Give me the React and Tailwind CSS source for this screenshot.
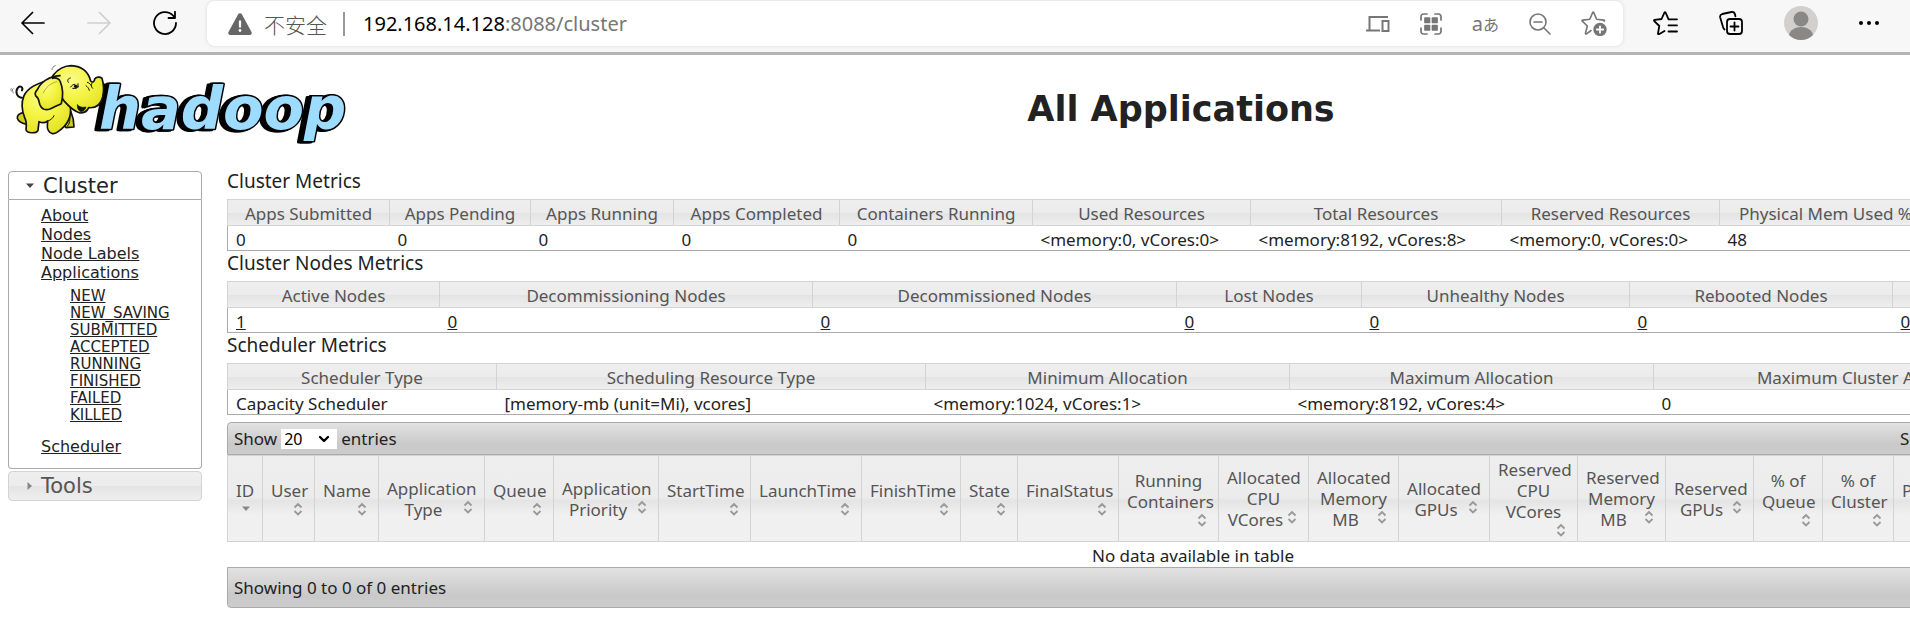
import { ChevronDown } from 'lucide-react';

const clusterMetrics = [
  { label: 'Apps Submitted', value: '0', width: 'w-[162px]' },
  { label: 'Apps Pending', value: '0', width: 'w-[141px]' },
  { label: 'Apps Running', value: '0', width: 'w-[143px]' },
  { label: 'Apps Completed', value: '0', width: 'w-[166px]' },
  { label: 'Containers Running', value: '0', width: 'w-[193px]' },
  { label: 'Used Resources', value: '<memory:0, vCores:0>', width: 'w-[218px]' },
  { label: 'Total Resources', value: '<memory:8192, vCores:8>', width: 'w-[251px]' },
  { label: 'Reserved Resources', value: '<memory:0, vCores:0>', width: 'w-[218px]' },
  { label: 'Physical Mem Used %', value: '48', width: 'w-[212px]' },
  { label: 'Physical VCores Used %', value: '0', width: '' },
];

const nodeMetrics = [
  { label: 'Active Nodes', value: '1', href: '#nodes', width: 'w-[212px]' },
  { label: 'Decommissioning Nodes', value: '0', href: '#decommissioning', width: 'w-[373px]' },
  { label: 'Decommissioned Nodes', value: '0', href: '#decommissioned', width: 'w-[364px]' },
  { label: 'Lost Nodes', value: '0', href: '#lost', width: 'w-[185px]' },
  { label: 'Unhealthy Nodes', value: '0', href: '#unhealthy', width: 'w-[268px]' },
  { label: 'Rebooted Nodes', value: '0', href: '#rebooted', width: 'w-[263px]' },
  { label: 'Shutdown Nodes', value: '0', href: '#shutdown', width: '' },
];

const schedulerMetrics = [
  { label: 'Scheduler Type', value: 'Capacity Scheduler', width: 'w-[269px]' },
  { label: 'Scheduling Resource Type', value: '[memory-mb (unit=Mi), vcores]', width: 'w-[429px]' },
  { label: 'Minimum Allocation', value: '<memory:1024, vCores:1>', width: 'w-[364px]' },
  { label: 'Maximum Allocation', value: '<memory:8192, vCores:4>', width: 'w-[364px]' },
  { label: 'Maximum Cluster Application Priority', value: '0', width: '' },
];

const appColumns = [
  { label: 'ID', width: 'w-[35px]', sorted: true },
  { label: 'User', width: 'w-[52px]' },
  { label: 'Name', width: 'w-[64px]' },
  { label: 'Application Type', width: 'w-[106px]' },
  { label: 'Queue', width: 'w-[69px]' },
  { label: 'Application Priority', width: 'w-[105px]' },
  { label: 'StartTime', width: 'w-[92px]' },
  { label: 'LaunchTime', width: 'w-[111px]' },
  { label: 'FinishTime', width: 'w-[99px]' },
  { label: 'State', width: 'w-[57px]' },
  { label: 'FinalStatus', width: 'w-[101px]' },
  { label: 'Running Containers', width: 'w-[100px]' },
  { label: 'Allocated CPU VCores', width: 'w-[90px]' },
  { label: 'Allocated Memory MB', width: 'w-[90px]' },
  { label: 'Allocated GPUs', width: 'w-[91px]' },
  { label: 'Reserved CPU VCores', width: 'w-[88px]' },
  { label: 'Reserved Memory MB', width: 'w-[88px]' },
  { label: 'Reserved GPUs', width: 'w-[88px]' },
  { label: '% of Queue', width: 'w-[69px]' },
  { label: '% of Cluster', width: 'w-[71px]' },
  { label: 'Progress', width: 'w-[84px]' },
  { label: 'Tracking UI', width: 'w-[84px]' },
  { label: 'Blacklisted Nodes', width: '' },
];

const appStates = ['NEW', 'NEW_SAVING', 'SUBMITTED', 'ACCEPTED', 'RUNNING', 'FINISHED', 'FAILED', 'KILLED'];

const stroke = { fill: 'none', stroke: 'currentColor', strokeLinecap: 'round', strokeLinejoin: 'round' };

/* Browser toolbar: navigation, address bar, extras */
function BrowserBar() {
  return (
    <header className="flex h-[55px] items-start border-b-[3px] border-[#b4b4b4] bg-[#f7f7f7] pl-[21px] pr-[31px] text-black">
      <nav className="flex h-[46px] items-center gap-[42px]">
        <button aria-label="Back">
          <svg viewBox="0 0 24 24" className="size-6" {...stroke} strokeWidth="1.7">
            <path d="M23 12H1M11.500 1.500 1 12l10.500 10.500" />
          </svg>
        </button>
        <button aria-label="Forward" className="text-[#cfcfcf]">
          <svg viewBox="0 0 24 24" className="size-6" {...stroke} strokeWidth="1.7">
            <path d="M1 12h22M12.500 1.500 23 12 12.500 22.500" />
          </svg>
        </button>
        <button aria-label="Refresh">
          <svg viewBox="0 0 24 24" className="size-6" {...stroke} strokeWidth="1.8">
            <path d="M23 12A11 11 0 1 1 20 4.500L22 7M22 .800V7h-6.500" />
          </svg>
        </button>
      </nav>

      <div className="ml-[30px] mt-px flex h-[45px] min-w-0 flex-1 items-center rounded-lg bg-white pl-[21px] pr-4 shadow-[0_0_4px_rgba(0,0,0,0.12)]">
        <svg viewBox="0 0 24 22" className="h-[22px] w-6 shrink-0">
          <path d="M10.300 1.100a2 2 0 0 1 3.400 0l9.800 18a2 2 0 0 1-1.700 2.900H2.200a2 2 0 0 1-1.700-2.900z" fill="#666" />
          <path d="M12 7.500v7" stroke="#fff" strokeWidth="2.200" />
          <circle cx="12" cy="17.500" r="1.400" fill="#fff" />
        </svg>
        <span className="ml-3 text-[21px] leading-7 font-light text-[#555] font-['Noto_Sans_CJK_SC',sans-serif]">不安全</span>
        <span className="ml-4 h-6 w-[2px] bg-[#999]" />
        <span className="ml-[18px] flex-1 text-[20px] leading-7 text-[#767676]">
          <span className="text-black">192.168.14.128</span>:8088/cluster
        </span>
        <div className="flex items-center gap-[30px] text-[#767676]">
          <button aria-label="Send to devices">
            <svg viewBox="0 0 24 16" className="h-4 w-6" fill="none" stroke="currentColor" strokeWidth="2">
              <path d="M22 1H3.500v13M0 14.500h14" />
              <path d="M16.500 5H22.500v10h-6z" />
            </svg>
          </button>
          <button aria-label="QR code">
            <svg viewBox="0 0 22 22" className="size-[22px]" {...stroke} strokeWidth="1.700">
              <path d="M1 7V3.500A2.500 2.500 0 0 1 3.500 1H7M15 1h3.500A2.500 2.500 0 0 1 21 3.500V7M21 15v3.500a2.500 2.500 0 0 1-2.500 2.500H15M7 21H3.500A2.500 2.500 0 0 1 1 18.500V15" />
              <path d="M5 5h4.500v4.500H5zM12.500 5H17v4.500h-4.500zM5 12.500h4.500V17H5zM12.500 12.500H17V17h-4.500z" fill="currentColor" />
            </svg>
          </button>
          <button aria-label="Translate" className="flex items-center">
            <span className="text-[20px] leading-6">a</span>
            <span className="text-[16px] leading-6 font-['Noto_Sans_CJK_JP',sans-serif]">あ</span>
          </button>
          <button aria-label="Zoom out">
            <svg viewBox="0 0 22 22" className="size-[22px]" {...stroke} strokeWidth="1.600">
              <circle cx="9" cy="9" r="8" />
              <path d="M5 9h8M15 15l6 6" />
            </svg>
          </button>
          <button aria-label="Add to favorites">
            <svg viewBox="0 0 26 25" className="h-[25px] w-[26px]" {...stroke} strokeWidth="1.600">
              <path d="M10 19.500 5.500 22.800C4.800 23.300 4.400 22.800 4.500 22.200L6.300 15 1.300 10.200C.8 9.600 1 9.200 1.700 9.100L8.800 8.200 11.600 1.600C11.900 1 12.500 1 12.800 1.600L15.600 8.200 22.800 9.100C23.600 9.200 23.700 9.800 23.200 10.200" />
              <circle cx="19" cy="18.500" r="6.700" fill="currentColor" stroke="none" />
              <path d="M19 15.300v6.400M15.800 18.500h6.400" stroke="#fff" strokeWidth="1.800" />
            </svg>
          </button>
        </div>
      </div>

      <div className="ml-[30px] flex h-[46px] items-center gap-[41px]">
        <button aria-label="Favorites">
          <svg viewBox="0 0 25 24" className="h-6 w-[25px]" {...stroke} strokeWidth="1.800">
            <path d="M11.500 20 6 23.200C5.300 23.500 4.900 23.100 5 22.400L6.300 15 1.300 10.200C.8 9.600 1 9 1.700 8.900L8.600 8 11.400 1.600C11.700 1 12.300 1 12.600 1.600L15.600 8.300H24M15.500 14.300H24M15.500 20.500H24" />
          </svg>
        </button>
        <button aria-label="Collections">
          <svg viewBox="0 0 24 24" className="size-6" {...stroke} strokeWidth="1.800">
            <path d="M5.500 18.500C4.800 18 4.300 17 4 16L1.200 6.500C.8 4.800 1.600 3.500 3.200 3L12.500 1C14.300.8 15.600 1.800 16 3.500L16.400 5.300" />
            <rect x="8" y="8" width="15" height="15" rx="3" />
            <path d="M15.500 11.500v8M11.500 15.500h8" />
          </svg>
        </button>
        <button aria-label="Profile">
          <svg viewBox="0 0 34 34" className="size-[34px]">
            <circle cx="17" cy="17" r="17" fill="#d2d0ce" />
            <circle cx="17" cy="13" r="7.500" fill="#8a8886" />
            <path d="M5 29c1-5 6-8 12-8s11 3 12 8a17 17 0 0 1-24 0z" fill="#8a8886" />
          </svg>
        </button>
        <button aria-label="More">
          <svg viewBox="0 0 20 6" className="h-[6px] w-5" fill="currentColor">
            <circle cx="2" cy="3" r="2" />
            <circle cx="10" cy="3" r="2" />
            <circle cx="18" cy="3" r="2" />
          </svg>
        </button>
      </div>
    </header>
  );
}

function HadoopLogo() {
  return (
    <svg viewBox="0 0 360 100" className="h-[100px] w-[360px]" role="img" aria-label="hadoop">
      <defs>
        <radialGradient id="hide" cx="40%" cy="30%" r="75%">
          <stop offset="0" stopColor="#fbfb8a" />
          <stop offset=".5" stopColor="#f4f444" />
          <stop offset="1" stopColor="#e3e024" />
        </radialGradient>
      </defs>
      <text
        x="99" y="74" fill="#9edcff" stroke="#000" strokeWidth="3" strokeLinejoin="round" paintOrder="stroke"
        className="font-['DejaVu_Sans',sans-serif] text-[59px] font-bold italic [filter:drop-shadow(-2px_0_0_#000)_drop-shadow(-3px_1px_0_#000)]"
      >
        hadoop
      </text>
      <g transform="scale(.33333)" stroke="#111" strokeWidth="5" strokeLinejoin="round" strokeLinecap="round" fill="url(#hide)">
        <path d="M40 114c-4-6-4-12 0-14M34 108c-2-4-2-6 0-8M156 44c0-6 4-10 10-12" fill="none" stroke="#777" strokeWidth="3" />
        <path d="M66 128C48 126 46 108 54 98c8-8 16 0 12 8" fill="none" strokeWidth="6" />
        <path d="M186 190c6 14 6 24 12 28l24-2c0-16-4-34-10-48z" fill="#d2cf1c" />
        <path d="M72 172c-14 2-22 10-20 18 3 10 14 16 30 18z" fill="#d2cf1c" />
        <path d="M150 75C112 84 82 100 72 122c-10 24-6 46 2 66 6 12 6 22 4 36 2 12 32 12 36 2l3-26c8 4 18 4 26-2 0 12-4 20 2 28 6 12 18 12 26 6 12-8 26-18 34-36 6-12 8-26 6-42z" />
        <path d="M160 60c14-18 36-28 54-28 34 2 52 22 58 46 6 6 12 2 12-6 4-6 16-8 22-2 6 20 6 38 2 56-6 24-22 34-42 32-4 10-14 16-26 16-16-4-30-16-46-34L150 78z" />
        <path d="M232 150c10 8 18 8 26 6-2 8-8 14-16 14-8-4-10-10-10-20z" fill="#111" strokeWidth="2" />
        <path d="M180 62c-34 2-58 20-68 42-6 6-8 14-4 20 10 6 8 16 12 26 6 14 18 16 30 12 14-6 24-12 34-16 6-24 4-50-4-68-2-6-12-12-22-8" />
        <path d="M170 80c-20 6-32 16-40 34" fill="none" stroke="#b5b31a" strokeWidth="3" />
        <path d="M205 82c-4-6-2-11 6-13M212 96c4-6 8-8 12-8M218 100c8 2 12 0 18-5M234 86v8M262 82c6 2 10 6 12 10M258 92c4 4 8 6 10 14M276 84c-4 6-2 12 2 16" fill="none" strokeWidth="3" />
        <ellipse cx="227" cy="94" rx="5" ry="5" fill="#111" strokeWidth="1" />
        <path d="M202 214c8-8 8-20 8-30M144 198c10-4 14-8 18-16" fill="none" strokeWidth="3" />
      </g>
    </svg>
  );
}

function Sidebar() {
  return (
    <aside className="mt-[3px] w-[194px] shrink-0 font-['DejaVu_Sans',Verdana,sans-serif] text-[#222]">
      <button className="flex h-[29px] w-full items-center rounded-t border border-[#aaa] bg-white pl-4 text-[21px] leading-7">
        <svg viewBox="0 0 10 6" className="mr-2 h-[6px] w-[10px]"><path d="M1 .500h8L5 5z" fill="#444" /></svg>
        Cluster
      </button>
      <div className="rounded-b border border-t-0 border-[#aaa] pt-[6px] pb-3 pl-8 text-[16px] leading-[19px] underline">
        <ul>
          <li><a href="#about">About</a></li>
          <li><a href="#nodes">Nodes</a></li>
          <li><a href="#labels">Node Labels</a></li>
          <li><a href="#apps">Applications</a></li>
        </ul>
        <ul className="mt-[6px] mb-[13px] ml-[29px] text-[15px] leading-[17px]">
          {appStates.map((s) => (
            <li key={s}><a href={`#${s}`}>{s}</a></li>
          ))}
        </ul>
        <a href="#scheduler">Scheduler</a>
      </div>
      <button className="mt-[2px] flex h-[30px] w-full items-center rounded border border-[#d3d3d3] bg-[linear-gradient(#eeeeee,#ececec_48%,#e4e4e4_52%,#efefef)] pl-[18px] text-[21px] leading-7 text-[#555]">
        <svg viewBox="0 0 6 10" className="mr-2 h-[10px] w-[6px]"><path d="M.500 1v8L5 5z" fill="#888" /></svg>
        Tools
      </button>
    </aside>
  );
}

function MetricsTable({ title, items }) {
  return (
    <section>
      <h2 className="h-[30px] text-[19px] leading-6">{title}</h2>
      <table className="w-full table-fixed border-collapse">
        <thead>
          <tr className="h-[26px] bg-[linear-gradient(#eeeeee,#ececec_48%,#e4e4e4_52%,#efefef)]">
            {items.map((m) => (
              <th key={m.label} className={`${m.width} border border-[#d3d3d3] pt-px font-normal whitespace-nowrap text-[#555]`}>{m.label}</th>
            ))}
          </tr>
        </thead>
        <tbody className="border-x border-b border-[#aaa]">
          <tr className="h-[25px]">
            {items.map((m) => (
              <td key={m.label} className="pt-[2px] pl-2 whitespace-nowrap">
                {m.href ? <a href={m.href} className="underline">{m.value}</a> : m.value}
              </td>
            ))}
          </tr>
        </tbody>
      </table>
    </section>
  );
}

function SortIcon({ sorted }) {
  return (
    <svg viewBox="0 0 16 16" className="float-right size-4">
      {sorted
        ? <path d="M4 5.500h8L8 10z" fill="#888" />
        : <path d="M4.500 6.500 8 3l3.500 3.500M4.500 10 8 13.500l3.500-3.500" fill="none" stroke="#999" strokeWidth="1.800" />}
    </svg>
  );
}

function AppsTable() {
  return (
    <section className="mt-[7px]">
      <div className="flex h-[33px] items-center rounded-t border border-[#aaa] bg-[linear-gradient(#e2e2e2,#c9c9c9_70%,#cccccc)] pl-[6px]">
        <label className="flex items-center gap-1">
          Show
          <span className="relative">
            <select defaultValue="20" className="block h-[20px] w-[56px] appearance-none bg-white pl-[3px] text-[16px] leading-5 text-black">
              <option>20</option>
              <option>40</option>
              <option>60</option>
            </select>
            <ChevronDown className="pointer-events-none absolute top-[2px] right-[5px] size-4 text-black" strokeWidth={3.5} />
          </span>
          entries
        </label>
        <label className="ml-auto flex w-[258px] items-center gap-1">
          Search:
          <input type="text" className="h-[22px] w-[180px] border border-[#767676] bg-white px-1" />
        </label>
      </div>
      <table className="w-full table-fixed border-collapse">
        <thead>
          <tr className="bg-[linear-gradient(#eeeeee,#ececec_48%,#e4e4e4_52%,#f0f0f0_68%)]">
            {appColumns.map((c) => (
              <th key={c.label} className={`${c.width} h-[86px] border border-[#d3d3d3] px-2 py-[2px] text-center align-middle font-normal text-[#555]`}>
                {c.label}
                <SortIcon sorted={c.sorted} />
              </th>
            ))}
          </tr>
        </thead>
        <tbody>
          <tr className="h-[25px]">
            <td colSpan={appColumns.length} className="pt-[3px] text-center">No data available in table</td>
          </tr>
        </tbody>
      </table>
      <div className="flex h-[41px] items-center rounded-b border border-[#aaa] bg-[linear-gradient(#e2e2e2,#c9c9c9_70%,#cccccc)] pl-[6px]">
        Showing 0 to 0 of 0 entries
      </div>
    </section>
  );
}

export default function App() {
  return (
    <div className="min-h-screen overflow-hidden bg-white font-['Noto_Sans','Noto_Sans_CJK_SC',sans-serif] text-[17px] leading-[21px] text-[#222]">
      <BrowserBar />
      <div className="flex h-[113px] items-start">
        <div className="w-[452px] shrink-0"><HadoopLogo /></div>
        <h1 className="mt-8 flex-1 text-center font-['DejaVu_Sans',Verdana,sans-serif] text-[35px] leading-[44px] font-bold">All Applications</h1>
      </div>
      <div className="flex items-start gap-[25px] pl-2">
        <Sidebar />
        <main className="min-w-[1932px] flex-1 pt-px">
          <MetricsTable title="Cluster Metrics" items={clusterMetrics} />
          <MetricsTable title="Cluster Nodes Metrics" items={nodeMetrics} />
          <MetricsTable title="Scheduler Metrics" items={schedulerMetrics} />
          <AppsTable />
        </main>
      </div>
    </div>
  );
}
